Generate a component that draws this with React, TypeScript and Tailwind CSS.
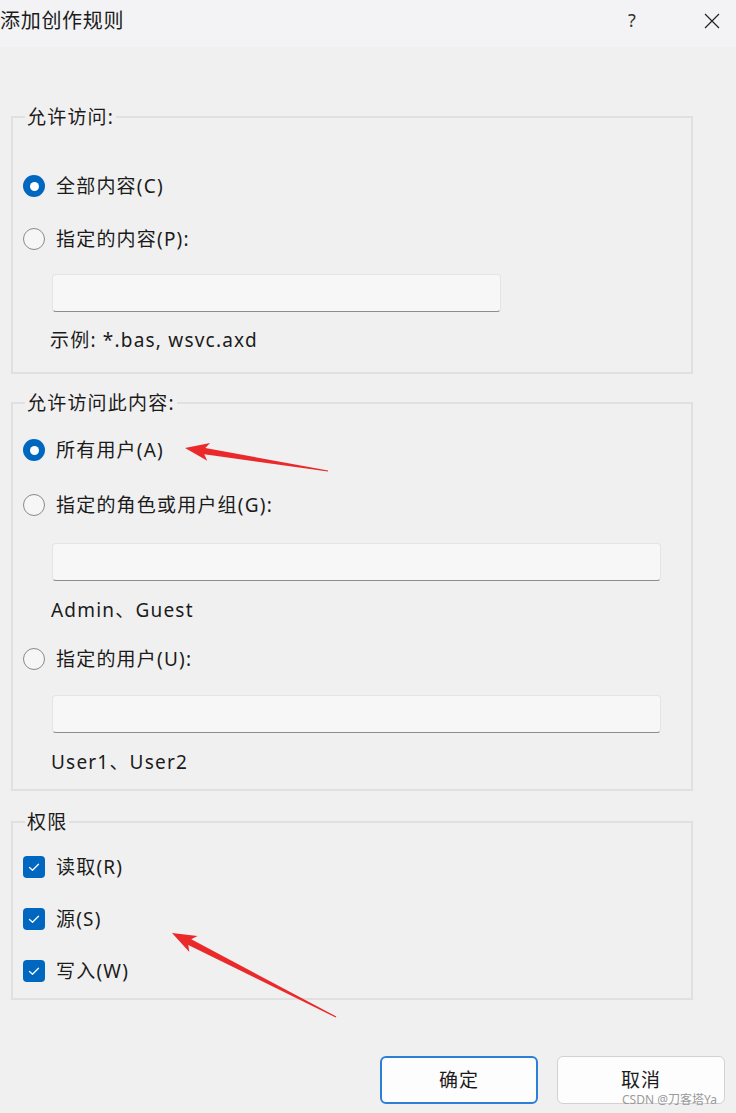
import React from 'react';

const font = { fontFamily: '"Noto Sans", "Noto Sans CJK SC", sans-serif' };

function Radio({ checked }: { checked?: boolean }) {
  if (checked) {
    return (
      <span className="w-[22px] h-[22px] rounded-full bg-[#0067c0] flex items-center justify-center shrink-0">
        <span className="w-[9px] h-[9px] rounded-full bg-white" />
      </span>
    );
  }
  return <span className="w-[22px] h-[22px] rounded-full border-[1.5px] border-[#8a8a8a] bg-[#f6f6f6] shrink-0" />;
}

function Check() {
  return (
    <span className="w-[22px] h-[22px] rounded-[4px] bg-[#0067c0] flex items-center justify-center shrink-0">
      <svg width="22" height="22" viewBox="0 0 22 22" fill="none">
        <path d="M6.5 11.5 L9.5 14.3 L15.5 8.2" stroke="white" strokeWidth="1.3" strokeLinecap="round" strokeLinejoin="round" />
      </svg>
    </span>
  );
}

function Row({ children, label, className = '' }: { children: React.ReactNode; label: string; className?: string }) {
  return (
    <div className={`flex items-center h-[28px] gap-[11px] text-[19px] tracking-[1.2px] text-[#1b1b1b] ${className}`}>
      {children}
      <span className="leading-[28px]">{label}</span>
    </div>
  );
}

function TextBox({ width, className = '' }: { width: string; className?: string }) {
  return (
    <div
      className={`${width} h-[38px] ml-[29px] rounded-[4px] bg-[#f7f7f7] border border-[#e4e4e4] border-b-[#8c8c8c] ${className}`}
    />
  );
}

function Note({ text, className = '' }: { text: string; className?: string }) {
  return <div className={`mt-[17px] text-[19px] leading-[24px] tracking-[1.2px] text-[#1b1b1b] ${className}`}>{text}</div>;
}

function Group({ legend, children, className = '' }: { legend: string; children: React.ReactNode; className?: string }) {
  return (
    <fieldset className={`ml-[11px] w-[682px] border-2 border-[#e0e0e0] ${className}`}>
      <legend className="ml-[12px] px-[2px] text-[19px] leading-[24px] tracking-[1.2px] text-[#1b1b1b]">{legend}</legend>
      <div className="pl-[10px] flex flex-col">{children}</div>
    </fieldset>
  );
}

// tapered annotation arrow from tail (tx,ty) to tip (hx,hy)
function arrowPoints(tx: number, ty: number, hx: number, hy: number) {
  const dx = hx - tx;
  const dy = hy - ty;
  const len = Math.hypot(dx, dy);
  const ux = dx / len;
  const uy = dy / len;
  const nx = -uy;
  const ny = ux;
  const headLen = 24;
  const headW = 9;
  const shaftW = 3.2;
  const bx = hx - ux * headLen;
  const by = hy - uy * headLen;
  const p = (x: number, y: number) => `${x.toFixed(1)},${y.toFixed(1)}`;
  return [
    p(tx + nx * 0.6, ty + ny * 0.6),
    p(bx + nx * shaftW + ux * 4, by + ny * shaftW + uy * 4),
    p(bx + nx * headW, by + ny * headW),
    p(hx, hy),
    p(bx - nx * headW, by - ny * headW),
    p(bx - nx * shaftW + ux * 4, by - ny * shaftW + uy * 4),
    p(tx - nx * 0.6, ty - ny * 0.6),
  ].join(' ');
}

export default function App() {
  return (
    <div className="relative w-[736px] h-[1113px] bg-[#f0f0f0] overflow-hidden" style={font}>
      {/* Title bar */}
      <div className="h-[47px] bg-[#f3f3f5] flex items-center justify-between">
        <span className="text-[20px] text-[#1b1b1b] leading-[28px] -mt-[6px] tracking-[0.7px]">添加创作规则</span>
        <div className="flex items-center -mt-[6px] gap-[32px]">
          <span className="w-[48px] text-center text-[18px] text-[#333]">?</span>
          <span className="w-[48px] flex justify-center">
            <svg width="16" height="16" viewBox="0 0 16 16">
              <path d="M1 1 L15 15 M15 1 L1 15" stroke="#222" strokeWidth="1.2" />
            </svg>
          </span>
        </div>
      </div>

      {/* Group 1 */}
      <Group legend="允许访问:" className="mt-[58px] pb-[20px]">
        <Row label="全部内容(C)" className="mt-[43px]">
          <Radio checked />
        </Row>
        <Row label="指定的内容(P):" className="mt-[25px]">
          <Radio />
        </Row>
        <TextBox width="w-[449px]" className="mt-[21px]" />
        <Note text="示例: *.bas, wsvc.axd" className="ml-[27px] !mt-[16px]" />
      </Group>

      {/* Group 2 */}
      <Group legend="允许访问此内容:" className="mt-[17px] pb-[15px]">
        <Row label="所有用户(A)" className="mt-[21px]">
          <Radio checked />
        </Row>
        <Row label="指定的角色或用户组(G):" className="mt-[27px]">
          <Radio />
        </Row>
        <TextBox width="w-[609px]" className="mt-[24px]" />
        <Note text="Admin、Guest" className="ml-[28px]" />
        <Row label="指定的用户(U):" className="mt-[23px]">
          <Radio />
        </Row>
        <TextBox width="w-[609px]" className="mt-[22px]" />
        <Note text="User1、User2" className="ml-[28px]" />
      </Group>

      {/* Group 3 */}
      <Group legend="权限" className="mt-[19px] pb-[13px]">
        <Row label="读取(R)" className="mt-[19px]">
          <Check />
        </Row>
        <Row label="源(S)" className="mt-[24px]">
          <Check />
        </Row>
        <Row label="写入(W)" className="mt-[24px]">
          <Check />
        </Row>
      </Group>

      {/* Buttons */}
      <div className="flex mt-[56px] ml-[380px] gap-[19px]">
        <button className="w-[158px] h-[48px] rounded-[6px] bg-[#fdfdfd] border-2 border-[#2b7fd6] text-[19px] tracking-[0.9px] text-[#1b1b1b]">
          确定
        </button>
        <button className="w-[168px] h-[48px] rounded-[6px] bg-[#fdfdfd] border border-[#d2d2d2] text-[19px] tracking-[0.9px] text-[#1b1b1b]">
          取消
        </button>
      </div>

      {/* Annotation arrows */}
      <svg className="absolute inset-0 pointer-events-none" width="736" height="1113">
        <polygon points={arrowPoints(328, 471, 185, 448)} fill="#ea2a2a" />
        <polygon points={arrowPoints(336, 1017, 172, 933)} fill="#ea2a2a" />
      </svg>

      {/* Watermark */}
      <span className="absolute left-[622px] top-[1092px] text-[12px] leading-[16px] text-[#9a9a9a] pointer-events-none">
        CSDN @刀客塔Ya
      </span>
    </div>
  );
}
